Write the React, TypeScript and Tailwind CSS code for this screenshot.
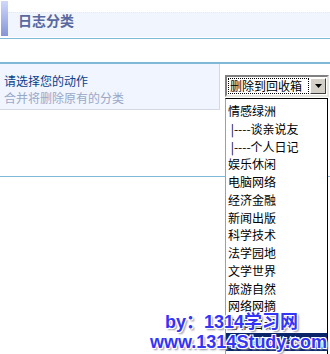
import React from "react";

const items = [
  "情感绿洲",
  " |----谈亲说友",
  " |----个人日记",
  "娱乐休闲",
  "电脑网络",
  "经济金融",
  "新闻出版",
  "科学技术",
  "法学园地",
  "文学世界",
  "旅游自然",
  "网络网摘",
  "心情日记",
  "删除到回收箱",
];

export default function App() {
  return (
    <div className="relative w-[330px] h-[354px] overflow-hidden bg-white text-[12px] font-['Noto_Sans_CJK_SC',sans-serif]">
      {/* Header */}
      <div className="h-[39px] border-b border-[#80b8d8] flex">
        <div className="ml-px mt-px w-[7px] h-[35px] bg-gradient-to-b from-[#d0d8fb] to-[#8794d6]" />
        <div className="flex-1 mt-[12px] h-[25px] pl-[10px] bg-[#f1f5fd] border-t border-dotted border-[#e4e8f0]">
          <h1 className="text-[14px] leading-[14px] font-bold text-[#5a68a0]">日志分类</h1>
        </div>
      </div>

      {/* Action row */}
      <div className="mt-[23px] border-t-2 border-[#80b8d8] flex h-[48px]">
        <div className="w-[220px] bg-[#f0f5ff] border-r border-b border-[#d4d8e2] pl-[4px] pt-[8px] leading-[17px]">
          <div className="text-[#0a3c88]">请选择您的动作</div>
          <div className="text-[#9aa8c8]">合并将删除原有的分类</div>
        </div>
        <div className="flex-1 pl-[5px] pt-[11px]">
          <div className="flex w-[104px] h-[22px] border-2 border-t-[#808080] border-l-[#808080] border-b-[#e8e6e0] border-r-[#e8e6e0] bg-white">
            <div className="flex-1 m-px border border-dotted border-black pl-px leading-[14px] text-black">删除到回收箱</div>
            <div className="w-[16px] my-px mr-px flex items-center justify-center bg-[#d4d0c8] border border-t-white border-l-white border-b-[#404040] border-r-[#404040]">
              <svg width="7" height="4" viewBox="0 0 7 4">
                <path d="M0 0h7L3.5 4z" fill="#000" />
              </svg>
            </div>
          </div>
        </div>
      </div>

      {/* Second row border */}
      <div className="mt-[66px] border-t border-[#80b8d8]" />

      {/* Open dropdown list */}
      <div className="absolute left-[225px] top-[98px] w-[103px] h-[270px] bg-white border border-t-black border-r-black border-l-[#a0a0a0] pt-[3px]">
        {items.map((t, i) => (
          <div
            key={i}
            className={
              "h-[17.75px] leading-[17.75px] pl-[2px] whitespace-pre " +
              (i === items.length - 1 ? "bg-[#0a246a] text-white" : "text-black")
            }
          >
            {t}
          </div>
        ))}
      </div>

      {/* Watermark */}
      <div className="absolute left-[165px] top-[312px] text-[18px] leading-[20px] font-bold text-[#3434f4] font-['Liberation_Sans','Noto_Sans_CJK_SC',sans-serif] [text-shadow:1px_1px_0_#ffffff,-1px_-1px_0_#ffffff,1px_-1px_0_#ffffff,-1px_1px_0_#ffffff,2px_2px_2px_#9090a0]">
        by：1314学习网
      </div>
      <div className="absolute left-[150px] top-[332px] text-[18px] leading-[20px] font-bold text-[#3434f4] font-['Liberation_Sans',sans-serif] [text-shadow:1px_1px_0_#ffffff,-1px_-1px_0_#ffffff,1px_-1px_0_#ffffff,-1px_1px_0_#ffffff,2px_2px_2px_#9090a0]">
        www.1314Study.com
      </div>
    </div>
  );
}
